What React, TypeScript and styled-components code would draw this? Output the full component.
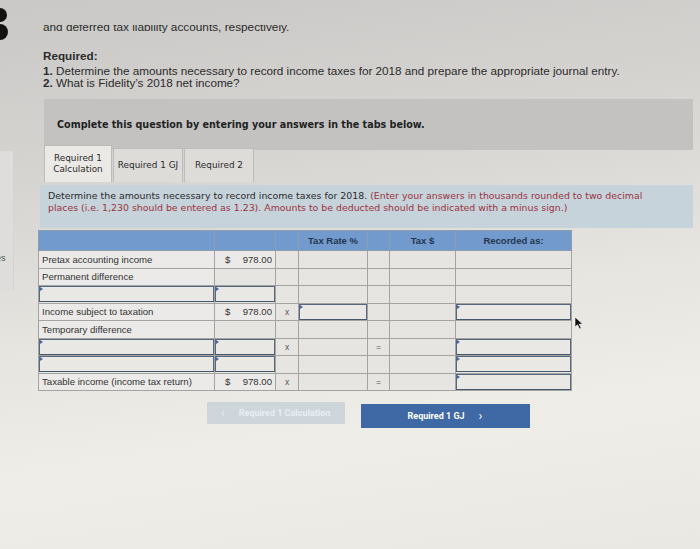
import React from "react";
import styled, { createGlobalStyle } from "styled-components";

const GlobalStyle = createGlobalStyle`
  html, body {
    margin: 0;
    padding: 0;
  }
  body {
    width: 700px;
    height: 549px;
    overflow: hidden;
    font-family: "Liberation Sans", Arial, sans-serif;
    color: #2b2b2b;
    background: linear-gradient(172deg, #c9c8c6 0%, #d6d5d2 30%, #e6e5e0 55%, #eeede7 75%, #e9e8e2 100%);
  }
`;

const Page = styled.div`
  position: relative;
  display: flex;
  height: 549px;
`;

const Sidebar = styled.div`
  width: 14px;
  flex-shrink: 0;
  display: flex;
  flex-direction: column;
`;

const SideTop = styled.div`
  height: 146px;
  padding-top: 4px;
`;

const SidePanel = styled.div`
  height: 140px;
  border-right: 1px solid #d4d3cf;
  border-top: 1px solid #d4d3cf;
  background: #dedddb;
  font-size: 9px;
  color: #555;
  display: flex;
  flex-direction: column;
  justify-content: space-between;
  padding: 12px 0 27px 0;
  box-sizing: border-box;
`;

const SideMark = styled.span`
  display: block;
  margin-left: -4px;
  line-height: 9px;
`;

const Main = styled.div`
  flex: 1;
  padding: 0 7px 0 29px;
  display: flex;
  flex-direction: column;
`;

const ClipLine = styled.div`
  margin-top: 25px;
  height: 8px;
  overflow: hidden;
`;

const LeadText = styled.p`
  margin: -4px 0 0 0;
  font-size: 11.8px;
  line-height: 12px;
`;

const Required = styled.div`
  margin-top: 17px;
  font-size: 11.7px;
  line-height: 11.5px;
`;

const ReqTitle = styled.div`
  font-weight: bold;
  line-height: 12px;
  margin-bottom: 3px;
`;

const ReqLine = styled.div`
  b {
    font-weight: bold;
  }
`;

const Prompt = styled.div`
  margin-top: 11px;
  margin-left: 1px;
  height: 51px;
  background: #c3c2c1;
  display: flex;
  align-items: center;
  padding-left: 13px;
  font-family: "DejaVu Sans", Verdana, sans-serif;
  font-weight: bold;
  font-size: 9.6px;
  color: #222;
`;

const Tabs = styled.div`
  display: flex;
  align-items: flex-end;
  margin-top: -5px;
  margin-left: 1px;
  height: 37px;
`;

const Tab = styled.div<{ $active?: boolean }>`
  width: ${({ $active }) => ($active ? "68px" : "70px")};
  height: ${({ $active }) => ($active ? "37px" : "34px")};
  box-sizing: border-box;
  margin-right: 1px;
  border: 1px solid #bdbcba;
  border-bottom: none;
  background: ${({ $active }) => ($active ? "#eae9e6" : "#dddcd9")};
  font-family: "DejaVu Sans", Verdana, sans-serif;
  font-size: 8.9px;
  line-height: 11px;
  color: #2a2a2a;
  display: flex;
  align-items: center;
  justify-content: center;
  text-align: center;
  white-space: nowrap;
`;

const Instructions = styled.div`
  margin: 3px 0 0 -3px;
  background: #c6d3da;
  padding: 5px 26px 14px 8px;
  font-family: "DejaVu Sans", Verdana, sans-serif;
  font-size: 9.4px;
  line-height: 12px;
  color: #2a2a2a;
`;

const Red = styled.span`
  color: #9c3240;
`;

const Table = styled.table`
  margin-top: 2px;
  margin-left: -5px;
  border-collapse: collapse;
  table-layout: fixed;
  width: 526px;
  font-size: 9.6px;
  color: #333;
`;

const HeadCell = styled.th<{ $w: number }>`
  width: ${({ $w }) => $w}px;
  height: 19px;
  padding: 0;
  background: #739acc;
  border: 1px solid #8d9cae;
  font-weight: bold;
  font-size: 9.5px;
  color: #23364f;
  text-align: center;
  vertical-align: middle;
`;

const Row = styled.tr`
  height: 17.5px;
`;

const Cell = styled.td<{ $bg?: string }>`
  padding: 0;
  border: 1px solid #a3a3a1;
  background: ${({ $bg }) => $bg || "#e6e5e2"};
  vertical-align: middle;
  white-space: nowrap;
  overflow: hidden;
`;

const Label = styled.span`
  padding-left: 3px;
`;

const Amount = styled.div`
  display: flex;
  justify-content: space-between;
  padding: 0 3px 0 10px;
`;

const Mark = styled.div`
  text-align: center;
  font-size: 8.5px;
  color: #555;
`;

const InputBox = styled.div`
  position: relative;
  height: 16px;
  box-sizing: border-box;
  border: 1px solid #58687c;
  border-bottom-color: #46566b;
  background: #e9e8e5;
  &::before {
    content: "";
    position: absolute;
    left: 0;
    top: 0;
    border-left: 3px solid #4366a8;
    border-top: 2px solid transparent;
    border-bottom: 2px solid transparent;
  }
`;

const Buttons = styled.div`
  display: flex;
  justify-content: center;
  align-items: flex-start;
  gap: 16px;
  margin-top: 11px;
`;

const NavButton = styled.div<{ $primary?: boolean }>`
  width: ${({ $primary }) => ($primary ? "169px" : "138px")};
  height: ${({ $primary }) => ($primary ? "24px" : "22px")};
  margin-top: ${({ $primary }) => ($primary ? "2px" : "0")};
  background: ${({ $primary }) => ($primary ? "#3e69a5" : "#ced6dc")};
  color: ${({ $primary }) => ($primary ? "#ffffff" : "#e9eef2")};
  font-family: "Roboto", "Liberation Sans", sans-serif;
  font-weight: bold;
  font-size: 9px;
  display: flex;
  align-items: center;
  justify-content: center;
  gap: 14px;
`;

const Chevron = styled.span`
  font-size: 13px;
  font-weight: normal;
  line-height: 10px;
`;

const Cursor = styled.svg`
  position: absolute;
  left: 574px;
  top: 316px;
`;

const widths = [175, 60, 22, 68, 21, 65, 115];

type CellSpec =
  | { kind: "label"; text: string }
  | { kind: "amount" }
  | { kind: "mark"; text: string }
  | { kind: "input" }
  | { kind: "empty" };

const L = (text: string): CellSpec => ({ kind: "label", text });
const A: CellSpec = { kind: "amount" };
const X: CellSpec = { kind: "mark", text: "x" };
const EQ: CellSpec = { kind: "mark", text: "=" };
const I: CellSpec = { kind: "input" };
const E: CellSpec = { kind: "empty" };

const rows: CellSpec[][] = [
  [L("Pretax accounting income"), A, E, E, E, E, E],
  [L("Permanent difference"), E, E, E, E, E, E],
  [I, I, E, E, E, E, E],
  [L("Income subject to taxation"), A, X, I, E, E, I],
  [L("Temporary difference"), E, E, E, E, E, E],
  [I, I, X, E, EQ, E, I],
  [I, I, E, E, E, E, I],
  [L("Taxable income (income tax return)"), A, X, E, EQ, E, I],
];

const renderCell = (c: CellSpec, i: number) => {
  switch (c.kind) {
    case "label":
      return (
        <Cell key={i} $bg="#ebeae8">
          <Label>{c.text}</Label>
        </Cell>
      );
    case "amount":
      return (
        <Cell key={i} $bg="#ebeae8">
          <Amount>
            <span>$</span>
            <span>978.00</span>
          </Amount>
        </Cell>
      );
    case "mark":
      return (
        <Cell key={i}>
          <Mark>{c.text}</Mark>
        </Cell>
      );
    case "input":
      return (
        <Cell key={i}>
          <InputBox />
        </Cell>
      );
    default:
      return <Cell key={i} />;
  }
};

const App: React.FC = () => (
  <>
    <GlobalStyle />
    <Page>
      <Sidebar>
        <SideTop>
          <svg width="14" height="40" viewBox="0 0 14 40">
            <circle cx="0" cy="11" r="7" fill="#111" />
            <circle cx="0" cy="28" r="8" fill="#111" />
          </svg>
        </SideTop>
        <SidePanel>
          <SideMark>:</SideMark>
          <SideMark>es</SideMark>
        </SidePanel>
      </Sidebar>
      <Main>
        <ClipLine>
          <LeadText>and deferred tax liability accounts, respectively.</LeadText>
        </ClipLine>
        <Required>
          <ReqTitle>Required:</ReqTitle>
          <ReqLine>
            <b>1.</b> Determine the amounts necessary to record income taxes for 2018 and prepare the appropriate journal entry.
          </ReqLine>
          <ReqLine>
            <b>2.</b> What is Fidelity’s 2018 net income?
          </ReqLine>
        </Required>
        <Prompt>Complete this question by entering your answers in the tabs below.</Prompt>
        <Tabs>
          <Tab $active>
            Required 1
            <br />
            Calculation
          </Tab>
          <Tab>Required 1 GJ</Tab>
          <Tab>Required 2</Tab>
        </Tabs>
        <Instructions>
          Determine the amounts necessary to record income taxes for 2018.{" "}
          <Red>
            (Enter your answers in thousands rounded to two decimal places (i.e. 1,230 should be entered as 1.23). Amounts to be deducted should be indicated with a minus sign.)
          </Red>
        </Instructions>
        <Table>
          <thead>
            <tr>
              <HeadCell $w={widths[0]} />
              <HeadCell $w={widths[1]} />
              <HeadCell $w={widths[2]} />
              <HeadCell $w={widths[3]}>Tax Rate %</HeadCell>
              <HeadCell $w={widths[4]} />
              <HeadCell $w={widths[5]}>Tax $</HeadCell>
              <HeadCell $w={widths[6]}>Recorded as:</HeadCell>
            </tr>
          </thead>
          <tbody>
            {rows.map((r, ri) => (
              <Row key={ri}>{r.map(renderCell)}</Row>
            ))}
          </tbody>
        </Table>
        <Buttons>
          <NavButton>
            <Chevron>‹</Chevron>
            Required 1 Calculation
          </NavButton>
          <NavButton $primary>
            Required 1 GJ
            <Chevron>›</Chevron>
          </NavButton>
        </Buttons>
      </Main>
      <Cursor width="10" height="14" viewBox="0 0 10 14">
        <path d="M1 1 L1 11 L3.5 8.8 L5.6 13 L7.2 12.2 L5.2 8.2 L8.6 8 Z" fill="#111" stroke="#fff" strokeWidth="0.6" />
      </Cursor>
    </Page>
  </>
);

export default App;
